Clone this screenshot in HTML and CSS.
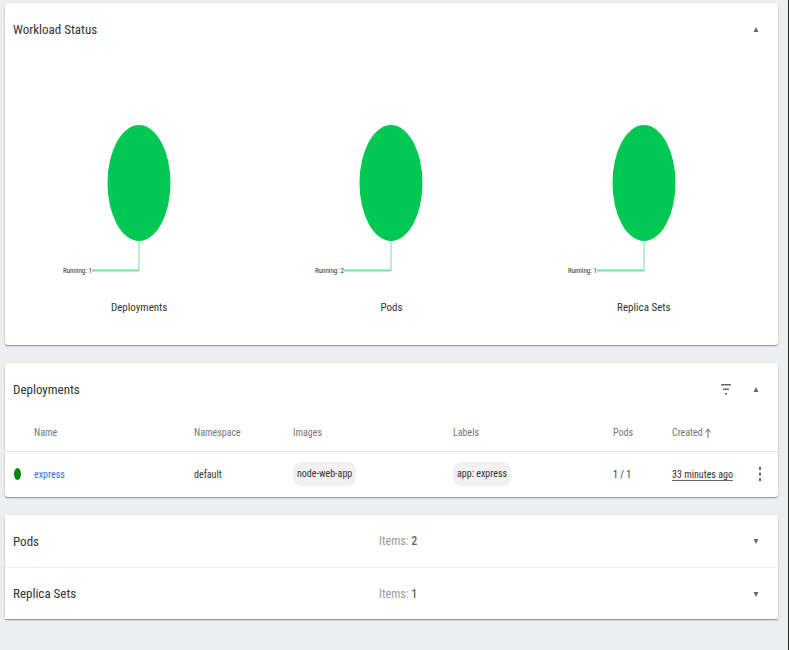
FILE: index.html
```html
<!DOCTYPE html>
<html lang="en">
<head>
<meta charset="utf-8">
<title>Workloads</title>
<link rel="stylesheet" href="styles.css">
</head>
<body>
<main class="content">
  <section class="card">
    <header class="card-header">
      <h2 class="card-title">Workload Status</h2>
      <button class="toggle" type="button" aria-label="Collapse workload status"><svg class="caret" viewBox="0 0 6 6"><path d="M3 1 5.500 6H.5z"/></svg></button>
    </header>
    <div class="charts">
      <figure class="chart">
        <svg class="pie" viewBox="0 0 160 152"><ellipse cx="80" cy="58" rx="31.500" ry="58"/><path class="stem" d="M80 116v30"/><path class="lead" d="M33 145.500h47"/><text x="33" y="148">Running: 1</text></svg>
        <figcaption>Deployments</figcaption>
      </figure>
      <figure class="chart">
        <svg class="pie" viewBox="0 0 160 152"><ellipse cx="80" cy="58" rx="31.500" ry="58"/><path class="stem" d="M80 116v30"/><path class="lead" d="M33 145.500h47"/><text x="33" y="148">Running: 2</text></svg>
        <figcaption>Pods</figcaption>
      </figure>
      <figure class="chart">
        <svg class="pie" viewBox="0 0 160 152"><ellipse cx="80" cy="58" rx="31.500" ry="58"/><path class="stem" d="M80 116v30"/><path class="lead" d="M33 145.500h47"/><text x="33" y="148">Running: 1</text></svg>
        <figcaption>Replica Sets</figcaption>
      </figure>
    </div>
  </section>

  <section class="card">
    <header class="card-header">
      <h2 class="card-title">Deployments</h2>
      <button class="filter" type="button" aria-label="Filter"><svg class="filter-icon" viewBox="0 0 10 12"><path d="M0 1h10v1.500H0zM2 5.500h6V7H2zM4 10h2v1.500H4z"/></svg></button>
      <button class="toggle" type="button" aria-label="Collapse deployments"><svg class="caret" viewBox="0 0 6 6"><path d="M3 1 5.500 6H.5z"/></svg></button>
    </header>
    <table class="table">
      <colgroup><col class="c-status"><col class="c-wide"><col class="c-mid"><col class="c-wide"><col class="c-wide"><col class="c-small"><col><col class="c-menu"></colgroup>
      <thead>
        <tr><th></th><th>Name</th><th>Namespace</th><th>Images</th><th>Labels</th><th>Pods</th><th>Created <svg class="sort" viewBox="0 0 6 10"><path d="M3 10V1M.5 4.500 3 1l2.500 3.500"/></svg></th><th></th></tr>
      </thead>
      <tbody>
        <tr>
          <td><svg class="status" viewBox="0 0 7 12"><ellipse cx="3.500" cy="6" rx="3.500" ry="6"/></svg></td>
          <td><a href="#express">express</a></td>
          <td>default</td>
          <td><span class="chip">node-web-app</span></td>
          <td><span class="chip">app: express</span></td>
          <td>1 / 1</td>
          <td><span class="time">33 minutes ago</span></td>
          <td><button class="menu" type="button" aria-label="Actions"><svg class="dots" viewBox="0 0 2 14"><path d="M0 0h2v3H0zM0 5.500h2v3H0zM0 11h2v3H0z"/></svg></button></td>
        </tr>
      </tbody>
    </table>
  </section>

  <div class="card stack">
    <section class="row">
      <h2 class="card-title">Pods</h2>
      <p class="items">Items: <b>2</b></p>
      <button class="toggle" type="button" aria-label="Expand pods"><svg class="caret" viewBox="0 0 6 6"><path d="M.5 1h5L3 6z"/></svg></button>
    </section>
    <section class="row">
      <h2 class="card-title">Replica Sets</h2>
      <p class="items">Items: <b>1</b></p>
      <button class="toggle" type="button" aria-label="Expand replica sets"><svg class="caret" viewBox="0 0 6 6"><path d="M.5 1h5L3 6z"/></svg></button>
    </section>
  </div>
</main>
</body>
</html>
```
FILE: styles.css
```css
* { box-sizing: border-box; }
body {
  margin: 0;
  min-height: 100vh;
  background: #edeef0;
  border-right: 1px solid #25282c;
  color: #333;
  font-family: "Roboto Condensed", "Liberation Sans Narrow", Roboto, sans-serif;
  font-size: 10px;
}
h2, p, figure { margin: 0; }
svg { display: block; }
button {
  display: flex;
  align-items: center;
  justify-content: center;
  width: 20px;
  height: 24px;
  padding: 0;
  border: 0;
  background: none;
}
.content {
  display: flex;
  flex-direction: column;
  gap: 18px;
  padding: 3px 10px 24px 5px;
}
.card {
  background: #fff;
  border-radius: 3px;
  box-shadow: 0 1px 1px rgba(0, 0, 0, .3), 0 1px 3px rgba(0, 0, 0, .14);
}
.card-header {
  display: flex;
  align-items: center;
  gap: 10px;
  height: 52px;
  padding: 0 12px 0 8px;
}
.card-title {
  flex: 1;
  color: #333;
  font-size: 13px;
  font-weight: 400;
}
.caret { width: 6px; height: 6px; fill: #6b6b6b; }
.filter-icon { width: 10px; height: 12px; fill: #666; }
.charts {
  display: grid;
  grid-template-columns: repeat(3, 1fr);
  padding: 70px 8px 28px;
}
.chart {
  display: flex;
  flex-direction: column;
  align-items: center;
  gap: 21px;
}
.pie { width: 160px; height: 152px; overflow: visible; fill: #00c853; }
.pie path { fill: none; stroke: #77e09f; }
.pie .lead { stroke-width: 2px; }
.pie text { fill: #333; font-size: 7px; text-anchor: end; }
.chart figcaption { font-size: 11px; line-height: 19px; }
.table {
  width: 100%;
  table-layout: fixed;
  border-collapse: collapse;
  text-align: left;
}
.table th { height: 36px; padding: 0; color: #757575; font-weight: 400; }
.table td { height: 46px; padding: 0; border-top: 1px solid #e2e2e2; }
.c-status { width: 29px; }
.c-wide { width: 160px; }
.c-mid { width: 99px; }
.c-small { width: 59px; }
.c-menu { width: 28px; }
.sort { display: inline-block; width: 6px; height: 10px; fill: none; stroke: #666; vertical-align: middle; }
.status { width: 7px; height: 12px; margin-left: 9px; fill: #008800; }
.table a { color: #326de6; text-decoration: none; }
.chip {
  display: inline-block;
  padding: 0 4px;
  border-radius: 8px;
  background: #f1f1f1;
  line-height: 24px;
}
.time { border-bottom: 1px solid #666; }
.dots { width: 2px; height: 14px; fill: #666; }
.stack { border-radius: 1px; }
.row {
  display: grid;
  grid-template-columns: 366px 1fr 20px;
  align-items: center;
  height: 52px;
  padding: 0 12px 0 8px;
}
.row + .row { border-top: 1px solid #eee; }
.items { color: #999; font-size: 12px; }
.items b { color: #666; font-weight: 500; }
```
